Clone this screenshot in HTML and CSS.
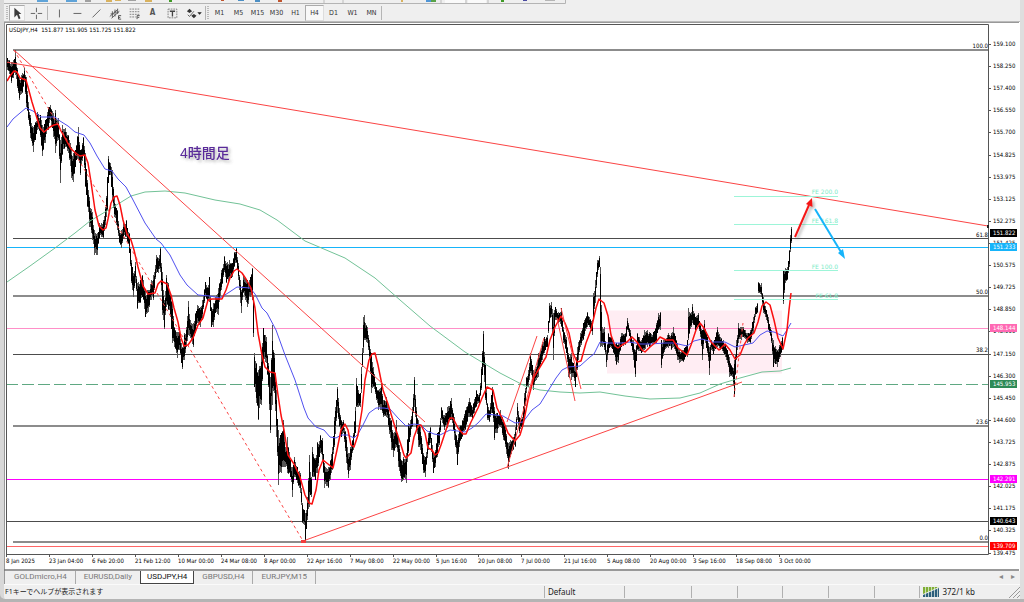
FILE: index.html
```html
<!DOCTYPE html>
<html lang="en">
<head>
<meta charset="utf-8">
<title>USDJPY,H4</title>
<link rel="stylesheet" href="styles.css">
</head>
<body>
<main class="window">
  <div class="upper-bar">
    <svg class="upper-icons" width="562" height="4" viewBox="4 0 562 4" aria-hidden="true">
      <path d="M4 3.500H565.500V0" fill="none" stroke="#b4b4b4"/>
      <path d="M37 0h11v2h-11zM66 0h11v2h-11z" fill="#5fa3d8"/>
      <path d="M85 0h6v2h-6zM128 0h8v1h-8z" fill="#a0a0a0"/>
      <path d="M106 0h6v2h-6zM115 0h6v1h-6zM145 0h7v2h-7zM401 0h2v2h-2z" fill="#d9b25e"/>
      <path d="M169 0h3v2h-3zM501 0h3v2h-3z" fill="#3f9a26"/>
      <path d="M221 0h3v1h-3zM278 0h4v2h-4z" fill="#c0552f"/>
      <path d="M238 0h6v1h-6zM255 0h5v2h-5z" fill="#4c8fc4"/>
      <path d="M426 0h5v2h-5z" fill="#4f95d6"/><path d="M431 0h5v2h-5z" fill="#58a348"/>
      <path d="M445 0h20v3h-20zM468 0h18v3h-18z" fill="#fafafa"/>
      <path d="M324 0v3M343 0v3M441 0v3M466 0v3M488 0v3" stroke="#bbb"/>
      <path d="M523 0h4v1h-4z" fill="#4a4aa0"/><path d="M545 0h10v1h-10z" fill="#b5b5b5"/>
    </svg>
  </div>

  <div class="toolbar" role="toolbar">
    <span class="grip"></span>
    <button class="tool first pressed" aria-label="Cursor"><svg viewBox="0 0 16 16"><path d="M5 2v11l3-3 2 5 2-1-2-5h3z" fill="#3c3c3c"/></svg></button>
    <button class="tool" aria-label="Crosshair"><svg viewBox="0 0 16 16"><path d="M8.500 2v5M8.500 10v5M2 8.500h5M10 8.500h5" stroke="#555" fill="none"/></svg></button>
    <span class="sep"></span>
    <button class="tool narrow" aria-label="Vertical line"><svg viewBox="0 0 16 16"><path d="M8.500 4v9" stroke="#555"/></svg></button>
    <button class="tool" aria-label="Horizontal line"><svg viewBox="0 0 16 16"><path d="M4 8.500h9" stroke="#555"/></svg></button>
    <button class="tool" aria-label="Trendline"><svg viewBox="0 0 16 16"><path d="M4 13l9-9" stroke="#555"/></svg></button>
    <button class="tool" aria-label="Channel"><svg viewBox="0 0 16 16"><path d="M2 12l9-8M4 14l9-8M5 6v7M8 4v8M11 3v6M3 9h4M7 7h5" stroke="#555" fill="none"/><path d="M15 11h-3v4h3M12 13h2" stroke="#444" fill="none"/></svg></button>
    <button class="tool" aria-label="Fibonacci retracement"><svg viewBox="0 0 16 16"><path d="M3 3.500h11M3 6.500h11M3 9.500h11M3 12.500h7" stroke="#777" stroke-dasharray="2 1"/><path d="M11.500 15v-4h3M12 13h2" stroke="#444" fill="none"/></svg></button>
    <button class="tool letter" aria-label="Text">A</button>
    <button class="tool" aria-label="Text label"><svg viewBox="0 0 16 16"><path d="M3.500 3.500h10v10h-10z" fill="none" stroke="#777" stroke-dasharray="2 1"/><path d="M5.500 6h6M8.500 6v6" stroke="#444" stroke-width="1.500"/></svg></button>
    <button class="tool objects" aria-label="Arrows"><svg viewBox="0 0 20 16"><path d="M3 6l3-3 3 3-3 2zM8 11l3-2 3 2-3 3z" fill="#333"/><path d="M4 10l2 2 5-6" fill="none" stroke="#555"/><path d="M15 7h5l-2.500 3z" fill="#222"/></svg></button>
    <span class="sep tight"></span>
    <span class="grip"></span>
    <div class="frames">
      <button>M1</button><button>M5</button><button>M15</button><button>M30</button><button>H1</button><button class="pressed">H4</button><button>D1</button><button>W1</button><button>MN</button>
    </div>
    <span class="sep tight"></span>
  </div>

  <svg class="chart" viewBox="4 22 1016 549" role="img" aria-label="USDJPY H4 price chart">
    <defs>
      <filter id="soft" x="-30%" y="-30%" width="170%" height="170%"><feDropShadow dx="2" dy="2" stdDeviation="1.500" flood-color="#555" flood-opacity=".45"/></filter>
      <clipPath id="plot"><rect x="7" y="25" width="981" height="529"/></clipPath>
    </defs>
    <rect x="4" y="22" width="1016" height="549" fill="#fff"/>
    <path d="M4 22.500H1019" stroke="#999"/>
    <path d="M4.500 22V571" stroke="#999"/>
    <rect x="607" y="310.500" width="175" height="63" fill="#ffedf3"/>

    <g class="levels">
      <path d="M13 50H988M13 296H988M13 426H988M13 542H988" stroke="#8c8c8c" stroke-width="1.600"/>
      <path d="M13 238.500H988M13 354.500H988M6 521.500H988" stroke="#4c4c4c"/>
      <path d="M6 247.500H988" stroke="#16b4fa"/>
      <path d="M6 328.500H988" stroke="#ff8fc8"/>
      <path d="M6 384.500H988" stroke="#5fa882" stroke-dasharray="12 4"/>
      <path d="M6 479.500H988" stroke="#ff00ff"/>
      <path d="M6 546.500H988" stroke="#ff6666"/>
    </g>

    <g clip-path="url(#plot)">
      <path id="wicks" class="wicks"/>
      <path id="bars" class="bars"/>
      <path class="ma-green" d="M7 282L30 266 55 248 75 233 90 221 110 209 131 196 145 192 165 191 185 193 215 200 240 204 260 210 277 220 305 241 345 258 375 278 400 300 430 326 465 352 500 373 525 386 540 390 560 392 580 393 600 392 625 396 650 399 680 398 700 393 720 384 740 378 762 372 780 371 791 368"/>
      <path class="ma-blue" d="M7 127L13 119 20 113 26 108 33 111 41 117 55 117 60 121 68 126 75 132 84 135 90 143 97 156 105 169 112 171 118 179 126 187 132 198 145 223 156 239 161 243 170 255 180 275 187 285 198 295 210 296 220 298 228 293 237 287 250 288 255 294 262 308 267 313 276 330 285 355 295 380 304 408 308 418 316 427 324 430 330 437 336 438 341 435 348 435 354 438 358 434 363 425 369 413 376 408 384 408 390 409 398 418 406 426 414 424 421 425 427 431 434 434 440 435 450 430 465 432 472 428 478 423 486 414 495 415 503 416 515 423 523 422 532 410 540 404 548 391 556 378 562 370 568 367 580 366 590 357 594 354 600 342 608 343 622 343 630 342 640 344 650 344 665 343 674 343 687 346 694 341 702 339 712 342 725 342 735 347 744 345 753 343 760 335 767 331 774 332 783 336 787 330 791 323"/>
      <path class="ma-red" d="M7 81L10 76 14 71 17 72 20 78 26 80 28 87 32 102 36 115 40 128 44 132 50 127 54 125 58 124 61 131 65 138 71 149 77 154 80 156 85 155 88 163 91 182 95 210 99 226 103 230 106 228 108 219 111 203 114 197 117 196 120 205 123 220 127 234 131 240 134 250 138 267 143 286 148 294 155 293 158 284 161 281 167 284 171 295 174 308 178 322 181 338 184 346 188 345 193 338 198 325 203 318 208 300 212 299 222 299 226 290 230 278 234 271 237 269 242 273 246 279 251 288 255 308 258 333 262 355 265 367 270 372 275 373 278 395 281 415 284 430 288 455 294 464 300 477 305 495 309 503 312 504 316 490 319 470 323 460 328 464 333 468 337 450 341 430 345 424 348 430 351 445 354 447 358 435 362 410 365 380 369 360 372 354 375 353 378 365 383 390 388 404 395 427 401 445 404 455 406 458 411 453 414 437 418 426 421 425 425 433 428 448 432 450 435 455 438 453 441 445 446 430 450 418 453 418 458 428 463 434 466 434 471 422 478 408 482 398 487 387 493 390 497 408 503 420 508 433 515 441 520 435 523 425 528 400 534 377 540 367 546 357 550 340 555 327 561 316 565 323 569 333 573 353 577 362 581 361 586 343 591 330 596 308 599 299 604 303 608 316 611 335 615 346 618 348 622 345 627 342 632 337 637 342 642 350 645 352 650 347 656 342 660 337 666 340 673 340 678 348 687 355 691 345 696 330 700 323 704 328 711 342 716 347 719 350 725 344 730 350 735 359 740 355 744 345 748 338 754 333 758 322 762 306 766 302 770 305 774 320 778 338 783 349 787 330 789 310 791 293"/>
      <g class="trend">
        <path d="M6 62L988 226M14 50L425 422M303 541L742 382M507 422L537 336M507 468L544 338M557 318L575 401M561 308L581 389"/>
        <path d="M14 50L303 541M734 397L743 323" stroke-dasharray="3 3"/>
      </g>
      <path d="M301 540h5v3h-5z" fill="#f43c3c"/>
      <path d="M734 196.500H838M734 224.500H838M734 270.500H838M734 299.500H838" stroke="#9df5d8"/>
    </g>

    <g class="fe" text-anchor="end">
      <text x="838" y="194">FE 200.0</text><text x="838" y="223">FE 161.8</text>
      <text x="838" y="269">FE 100.0</text><text x="838" y="298">FE 61.8</text>
    </g>
    <g filter="url(#soft)">
      <path d="M795 237L809 205" stroke="#f51414" stroke-width="2"/><path d="M812 198L812.500 207 806 204z" fill="#f51414"/>
    </g>
    <path d="M815 209L841 252" stroke="#16b4fa" stroke-width="2"/><path d="M845 259L838 253 843 249z" fill="#16b4fa"/>
    <text class="note" x="180" y="158" filter="url(#soft)">4時間足</text>

    <path d="M6.500 554.500V24.500H988.500V554.500z" fill="none" stroke="#555"/>
    <path d="M987 225h2v3h-2z" fill="#222"/>
    <text class="axis" x="9" y="32" xml:space="preserve">USDJPY,H4  151.877 151.905 151.725 151.822</text>
    <g class="axis" text-anchor="end">
      <text x="988" y="48">100.0</text><text x="988" y="237">61.8</text><text x="988" y="294">50.0</text>
      <text x="988" y="352">38.2</text><text x="988" y="424">23.6</text><text x="988" y="540">0.0</text>
    </g>
    <g id="prices" class="axis"></g>
    <g id="times" class="axis"></g>
    <path d="M4 570H1019" stroke="#777" stroke-width="1.500"/>
  </svg>

  <nav class="tabs">
    <a href="#gold">GOLDmicro,H4</a><a href="#eurusd">EURUSD,Daily</a><a class="active" href="#usdjpy">USDJPY,H4</a><a href="#gbpusd">GBPUSD,H4</a><a href="#eurjpy">EURJPY,M15</a>
    <span class="scrollers"><button aria-label="Scroll left">◂</button><button aria-label="Scroll right">▸</button></span>
  </nav>

  <footer class="status">
    <span class="help">F1キーでヘルプが表示されます</span>
    <span class="profile">Default</span>
    <span class="c1"></span><span class="c2"></span><span class="c2"></span><span class="c2"></span><span class="c2"></span><span class="c2"></span>
    <span class="link">
      <svg width="16" height="10" viewBox="0 0 16 10" aria-hidden="true"><path d="M0 0h16L0 7z" fill="#7fae35"/><path d="M16 1v9H0V8z" fill="#2c5f7c"/><path d="M2.500 0v10M5.500 0v10M8.500 0v10M11.500 0v10M14.500 0v10" stroke="#eef2ea" stroke-width=".7"/></svg>
      372/1 kb
    </span>
    <svg class="resize" width="12" height="12" viewBox="0 0 12 12" aria-hidden="true"><path d="M1 12L12 1M5 12l7-7M9 12l3-3" stroke="#999"/></svg>
  </footer>
</main>
<script src="chart.js"></script>
</body>
</html>
```
FILE: styles.css
```css
* { box-sizing: border-box; }

body {
  margin: 0;
  background: #b4b4b4;
  font: 8px/12px "Noto Sans", "Noto Sans CJK JP", sans-serif;
  color: #222;
}

button {
  margin: 0;
  padding: 0;
  border: 1px solid transparent;
  background: none;
  color: inherit;
  font: inherit;
}

.window {
  background: #efefef;
  border-left: 4px solid #d8d8d8;
  border-right: 4px solid #dedede;
  border-bottom-left-radius: 5px;
}

.upper-bar { height: 4px; }
.upper-icons { display: block; }

.toolbar {
  display: flex;
  align-items: center;
  height: 18px;
  padding-left: 1px;
  border-bottom: 1px solid #bbb;
}

.grip {
  width: 2px;
  height: 14px;
  margin: 0 1px;
  background: repeating-linear-gradient(#bbb 0 1px, #eee 1px 2px);
}

.sep {
  width: 1px;
  height: 14px;
  margin: 0 2px;
  background: #b5b5b5;
}

.sep.tight { margin: 0; }

.tool {
  display: flex;
  align-items: center;
  justify-content: center;
  width: 19px;
  height: 16px;
}

.tool svg { flex: none; width: 14px; height: 14px; }
.tool.first { width: 16px; margin-right: 1px; }
.tool.narrow { width: 17px; }
.tool.letter { font: bold 8px/12px "DejaVu Sans Condensed", "DejaVu Sans", sans-serif; color: #555; }
.tool.objects { width: 24px; }
.tool.objects svg { width: 18px; height: 14px; }

.pressed {
  background: #f8f8f8;
  border-color: #aaa #ddd #ddd #aaa;
}

.frames { display: flex; font: 7px/12px "DejaVu Sans Condensed", "DejaVu Sans", sans-serif; color: #333; }
.frames button { width: 19px; height: 16px; padding-top: 1px; white-space: nowrap; }

.chart { display: block; width: 100%; height: auto; }

.bars { fill: none; stroke: #000; shape-rendering: crispEdges; }
.wicks { fill: none; stroke: #555; shape-rendering: crispEdges; }
.levels path { shape-rendering: crispEdges; }
.ma-red { fill: none; stroke: #fa0f0f; stroke-width: 1.5; stroke-linejoin: round; }
.ma-blue { fill: none; stroke: #5050f0; stroke-width: 1; }
.ma-green { fill: none; stroke: #72c297; stroke-width: 1; }
.trend path { fill: none; stroke: #fb4444; stroke-width: 1; }

.axis { font: 6px "DejaVu Sans Condensed", "DejaVu Sans", sans-serif; fill: #000; }
.axis .tag { fill: #fff; }
.fe { font: 6px "DejaVu Sans", sans-serif; fill: #7cebc8; }
.note { font: 500 14px "Liberation Sans", "Noto Sans CJK JP", sans-serif; fill: #5a2a9a; }

.tabs {
  display: flex;
  height: 13px;
  padding-left: 1px;
  border-left: 1px solid #999;
  font: 8px/12px Roboto, sans-serif;
}

.tabs a {
  padding: 0 8px;
  color: #777;
  text-decoration: none;
  border-right: 1px solid #aaa;
}

.tabs a:nth-child(2) { border-right: 0; }

.tabs .active {
  padding: 0 6px;
  background: #fff;
  color: #111;
  border: 1px solid #444;
  border-top: 0;
}

.scrollers { display: flex; gap: 4px; margin-left: auto; padding-right: 3px; }
.scrollers button { width: 8px; height: 12px; line-height: 10px; color: #888; }

.status {
  display: flex;
  align-items: center;
  height: 15px;
  border-top: 1px solid #fafafa;
}

.status span { height: 12px; border-left: 1px solid #b0b0b0; white-space: nowrap; }
.status .help { flex: none; width: 53.15%; padding-left: 1px; border-left: 0; font-size: 7px; }
.status .profile { flex: 78; padding-left: 3px; }
.status .c1 { flex: 68; }
.status .c2 { flex: 46; }
.status .link { display: flex; align-items: center; flex: 87; gap: 3px; padding-left: 3px; }
.resize { flex: none; }
```
FILE: chart.js
```js
const NS = 'http://www.w3.org/2000/svg';

function add(parent, name, attrs, text) {
  const node = document.createElementNS(NS, name);
  for (const key in attrs) node.setAttribute(key, attrs[key]);
  if (text) node.textContent = text;
  parent.appendChild(node);
}

// x, high, low
const swings = `7 58 70,9 60 74,11 62 83,13 60 78,15 50 75,17 68 88,19 77 100,22 73 93,24 68 82,26 77 107,28 102 120,30 115 138,33 127 152,35 122 140,37 112 130,40 115 137,42 125 156,45 120 143,48 107 130,50 105 120,53 113 137,55 110 153,58 118 140,60 140 183,62 125 155,65 128 147,68 135 153,71 147 178,73 153 182,75 150 167,78 127 160,80 150 175,83 137 155,85 153 187,87 180 207,89 197 227,92 212 240,94 230 255,97 233 255,99 223 238,103 220 238,105 207 225,107 177 210,108 156 183,110 163 175,112 170 200,114 197 217,117 210 230,119 230 243,121 230 248,123 223 238,126 220 237,129 233 253,131 260 283,133 273 297,135 262 283,137 283 309,140 280 303,142 275 297,145 290 317,148 290 312,151 280 300,153 275 300,156 255 273,158 258 273,160 247 272,162 272 315,164 300 329,166 275 307,168 283 310,170 293 317,172 303 343,174 327 347,177 332 358,179 327 350,181 343 363,182 347 369,184 333 360,186 327 347,188 301 335,190 320 338,193 323 347,195 313 333,197 305 323,200 307 327,202 300 320,205 282 297,207 287 303,209 277 302,211 307 327,213 303 327,215 297 313,218 288 315,221 270 290,224 256 272,226 263 283,229 260 280,232 263 277,234 252 267,236 248 263,238 263 280,240 280 303,241 290 313,243 275 293,245 278 300,247 280 307,250 277 297,252 268 300,253 297 337,254 353 387,256 363 403,258 370 420,261 350 405,263 328 363,266 337 363,268 363 387,270 377 433,272 325 405,274 353 393,276 390 437,278 430 485,281 433 473,283 420 467,285 447 467,287 437 473,290 460 477,292 467 497,294 457 477,297 467 483,300 473 493,302 503 523,304 510 525,305 513 541,307 497 520,309 455 507,311 477 497,312 447 477,315 458 480,317 442 473,320 435 453,322 438 460,324 463 488,328 467 488,330 460 480,332 447 470,334 417 447,337 387 413,339 408 427,341 420 437,343 420 433,346 437 463,348 453 478,350 447 470,353 433 450,355 407 433,356 378 407,358 390 407,360 393 407,361 367 393,363 317 353,364 315 340,367 327 343,369 340 360,371 353 393,373 367 387,376 387 400,378 390 410,381 383 410,383 400 417,386 397 417,388 407 427,391 420 450,393 433 457,396 420 447,398 437 467,401 460 482,403 457 480,406 453 483,408 423 453,410 420 437,412 407 427,414 377 407,416 407 430,418 420 447,420 427 450,423 453 473,425 457 477,428 433 450,430 427 443,433 453 473,435 450 467,437 433 457,439 425 445,441 407 420,444 415 430,447 407 428,451 398 420,454 417 440,457 440 465,459 427 447,462 420 437,465 410 430,469 398 417,472 407 420,476 390 407,479 393 405,481 367 390,483 331 367,485 363 400,487 403 420,489 410 422,492 387 413,494 407 440,497 413 433,500 410 427,503 420 440,505 427 447,508 443 469,510 440 457,513 437 450,515 427 447,517 403 420,519 417 433,522 417 427,524 393 420,526 377 393,528 370 387,530 353 373,533 370 390,536 367 380,538 353 377,542 342 360,544 337 353,547 335 347,549 303 323,551 302 317,553 313 360,555 307 320,558 312 323,561 308 327,563 327 343,566 337 353,568 353 377,571 353 380,573 363 377,575 367 387,577 347 370,580 333 347,583 323 340,587 312 327,589 317 327,592 320 335,593 293 320,595 280 303,597 260 277,599 256 267,600 267 347,602 327 347,604 327 350,606 350 367,608 333 353,611 337 348,613 340 353,616 343 365,618 343 363,621 333 347,625 333 345,627 318 330,630 330 343,633 340 360,635 350 377,637 333 350,641 340 353,644 330 350,647 330 347,650 333 347,653 332 343,656 323 343,658 313 330,660 312 330,661 340 368,664 340 352,668 333 348,671 333 350,673 327 347,677 343 360,679 350 363,683 350 362,687 340 357,688 308 340,691 312 327,692 304 323,695 317 330,698 313 327,700 323 337,702 330 360,704 320 340,707 337 353,709 347 375,711 340 350,713 342 355,717 327 347,720 337 350,723 340 353,727 350 363,729 357 377,732 367 377,734 360 397,736 340 360,738 323 343,741 327 340,743 327 337,747 333 343,750 330 343,753 317 333,755 307 317,757 303 313,758 282 293,761 283 297,763 297 313,766 310 320,768 317 330,771 330 343,773 340 367,777 350 367,780 343 357,782 337 350,783 270 304,785 268 283,787 267 280,789 250 267,790 235 252,791 227 243`
  .split(',').map(s => s.split(' ').map(Number));

let seed = 7;
const noise = () => (seed = (seed * 16807) % 2147483647) / 2147483647;

let wicks = '';
let bodies = '';

function bar(x, top, bottom) {
  const range = bottom - top;
  wicks += `M${x + 0.5} ${Math.round(top)}V${Math.round(bottom)}`;
  bodies += `M${x + 0.5} ${Math.round(top + range * noise() * 0.3)}V${Math.round(bottom - range * noise() * 0.3)}`;
}

swings.forEach(([x, hi, lo], i) => {
  bar(x, hi, lo);
  const next = swings[i + 1];
  if (!next || x === 782) return;
  for (let k = x + 1; k < next[0]; k++) {
    const t = (k - x) / (next[0] - x);
    const top = hi + (next[1] - hi) * t;
    const bottom = lo + (next[2] - lo) * t;
    const range = bottom - top;
    bar(k, top + noise() * range * 0.2, bottom - noise() * range * 0.2);
  }
});
document.getElementById('wicks').setAttribute('d', wicks);
document.getElementById('bars').setAttribute('d', bodies);

const prices = document.getElementById('prices');
['159.100', '158.250', '157.400', '156.550', '155.700', '154.825', '153.975', '153.125', '152.275', '151.425', '150.575', '149.725',
 '148.850', '148.000', '147.150', '146.300', '145.450', '144.600', '143.725', '142.875', '142.025', '141.175', '140.325', '139.475']
  .forEach((label, i) => {
    const y = Math.round(44 + i * 22.11);
    add(prices, 'path', { d: `M988 ${y + 0.5}h3`, stroke: '#555' });
    add(prices, 'text', { x: 993, y: y + 2 }, label);
  });

[['151.822', 233, '#000'], ['151.233', 247, '#16b4fa'], ['148.144', 328, '#ff69b4'], ['145.953', 384, '#2e8b57'],
 ['142.291', 479, '#ff00ff'], ['140.643', 521, '#000'], ['139.709', 546, '#ff0000']]
  .forEach(([label, y, fill]) => {
    add(prices, 'rect', { x: 990, y: y - 4, width: 27, height: 8, fill });
    add(prices, 'text', { x: 993, y: y + 2, class: 'tag' }, label);
  });

const times = document.getElementById('times');
['8 Jan 2025', '23 Jan 04:00', '6 Feb 20:00', '21 Feb 12:00', '10 Mar 00:00', '24 Mar 08:00', '8 Apr 00:00', '22 Apr 16:00', '7 May 08:00',
 '22 May 00:00', '5 Jun 16:00', '20 Jun 08:00', '7 Jul 00:00', '21 Jul 16:00', '5 Aug 08:00', '20 Aug 00:00', '3 Sep 16:00', '18 Sep 08:00', '3 Oct 00:00']
  .forEach((label, i) => {
    const x = Math.round(6 + i * 42.95);
    add(times, 'path', { d: `M${x + 0.5} 554v3`, stroke: '#555' });
    add(times, 'text', { x, y: 563 }, label);
  });
```
